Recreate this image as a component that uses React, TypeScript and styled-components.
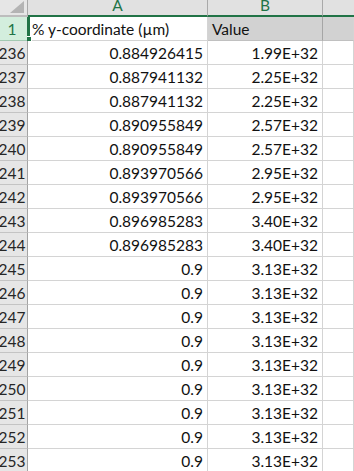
import React from "react";
import styled, { createGlobalStyle } from "styled-components";

const Global = createGlobalStyle`
  html, body { margin: 0; padding: 0; background: #ffffff; overflow: hidden; }
  body { font-family: Lato, "Open Sans", sans-serif; }
`;

const GREEN = "#217346";

const Sheet = styled.div`
  display: grid;
  grid-template-columns: 28px 180px 115px 1fr;
  grid-template-rows: 17px;
  grid-auto-rows: 24px;
  width: 354px;
  height: 471px;
  overflow: hidden;
  position: relative;
  font-family: Lato, "Open Sans", sans-serif;
  font-size: 15.5px;
  color: #111;
`;

const Corner = styled.div`
  box-sizing: border-box;
  background: #e6e6e6;
  border-right: 1px solid #a8a8a8;
  border-bottom: 2px solid #bdbdbd;
  position: relative;
`;

const Triangle = styled.div`
  position: absolute;
  right: 3px;
  bottom: 2px;
  width: 0;
  height: 0;
  border-left: 14px solid transparent;
  border-bottom: 12px solid #b4b4b4;
`;

const ColHead = styled.div<{ $last?: boolean }>`
  box-sizing: border-box;
  background: #e1e1e1;
  border-right: ${(p) => (p.$last ? "none" : "1px solid #a9a9a9")};
  border-bottom: 2px solid ${GREEN};
  color: ${GREEN};
  text-align: center;
  font-size: 15.5px;
  line-height: 11px;
  overflow: hidden;
`;

const RowHead = styled.div<{ $active?: boolean }>`
  box-sizing: border-box;
  display: flex;
  justify-content: center;
  align-items: center;
  background: ${(p) => (p.$active ? "#d3eedd" : "#e6e6e6")};
  color: ${(p) => (p.$active ? GREEN : "#262626")};
  border-right: 1px solid ${(p) => (p.$active ? GREEN : "#a3a3a3")};
  border-bottom: 1px solid ${(p) => (p.$active ? "#a3c9b2" : "#c4c4c4")};
  padding: 1px 3px 0 0;
  white-space: nowrap;
  overflow: hidden;
`;

const Cell = styled.div<{ $align?: "left" | "right"; $fill?: boolean; $active?: boolean; $edge?: boolean }>`
  box-sizing: border-box;
  background: ${(p) => (p.$fill ? "#d2d2d2" : "#ffffff")};
  border-right: 1px solid ${(p) => (p.$edge ? "#a6a6a6" : "#d4d4d4")};
  border-bottom: 1px solid ${(p) => (p.$fill ? "#c0c0c0" : "#d4d4d4")};
  border-left: ${(p) => (p.$active ? `2px solid ${GREEN}` : "none")};
  text-align: ${(p) => p.$align ?? "right"};
  padding: 0 ${(p) => (p.$align === "left" ? "0" : "4px")} 0 ${(p) => (p.$active ? "2px" : "4px")};
  line-height: 24px;
  white-space: nowrap;
  overflow: hidden;
`;

const FillHandle = styled.div`
  position: absolute;
  left: 27px;
  top: 36px;
  width: 5px;
  height: 5px;
  background: ${GREEN};
  border-top: 1px solid #fff;
  border-right: 1px solid #fff;
  box-sizing: border-box;
`;

type Row = { n: number; a: string; b: string };

const rows: Row[] = [
  { n: 236, a: "0.884926415", b: "1.99E+32" },
  { n: 237, a: "0.887941132", b: "2.25E+32" },
  { n: 238, a: "0.887941132", b: "2.25E+32" },
  { n: 239, a: "0.890955849", b: "2.57E+32" },
  { n: 240, a: "0.890955849", b: "2.57E+32" },
  { n: 241, a: "0.893970566", b: "2.95E+32" },
  { n: 242, a: "0.893970566", b: "2.95E+32" },
  { n: 243, a: "0.896985283", b: "3.40E+32" },
  { n: 244, a: "0.896985283", b: "3.40E+32" },
  ...[245, 246, 247, 248, 249, 250, 251, 252, 253].map((n) => ({ n, a: "0.9", b: "3.13E+32" })),
];

export default function App() {
  return (
    <>
      <Global />
      <Sheet>
        <Corner>
          <Triangle />
        </Corner>
        <ColHead>A</ColHead>
        <ColHead>B</ColHead>
        <ColHead $last />
        <RowHead $active>1</RowHead>
        <Cell $align="left" $active>% y-coordinate (µm)</Cell>
        <Cell $align="left" $fill $edge>Value</Cell>
        <Cell $fill />
        {rows.map((r) => (
          <React.Fragment key={r.n}>
            <RowHead>{r.n}</RowHead>
            <Cell>{r.a}</Cell>
            <Cell>{r.b}</Cell>
            <Cell />
          </React.Fragment>
        ))}
        <FillHandle />
      </Sheet>
    </>
  );
}
